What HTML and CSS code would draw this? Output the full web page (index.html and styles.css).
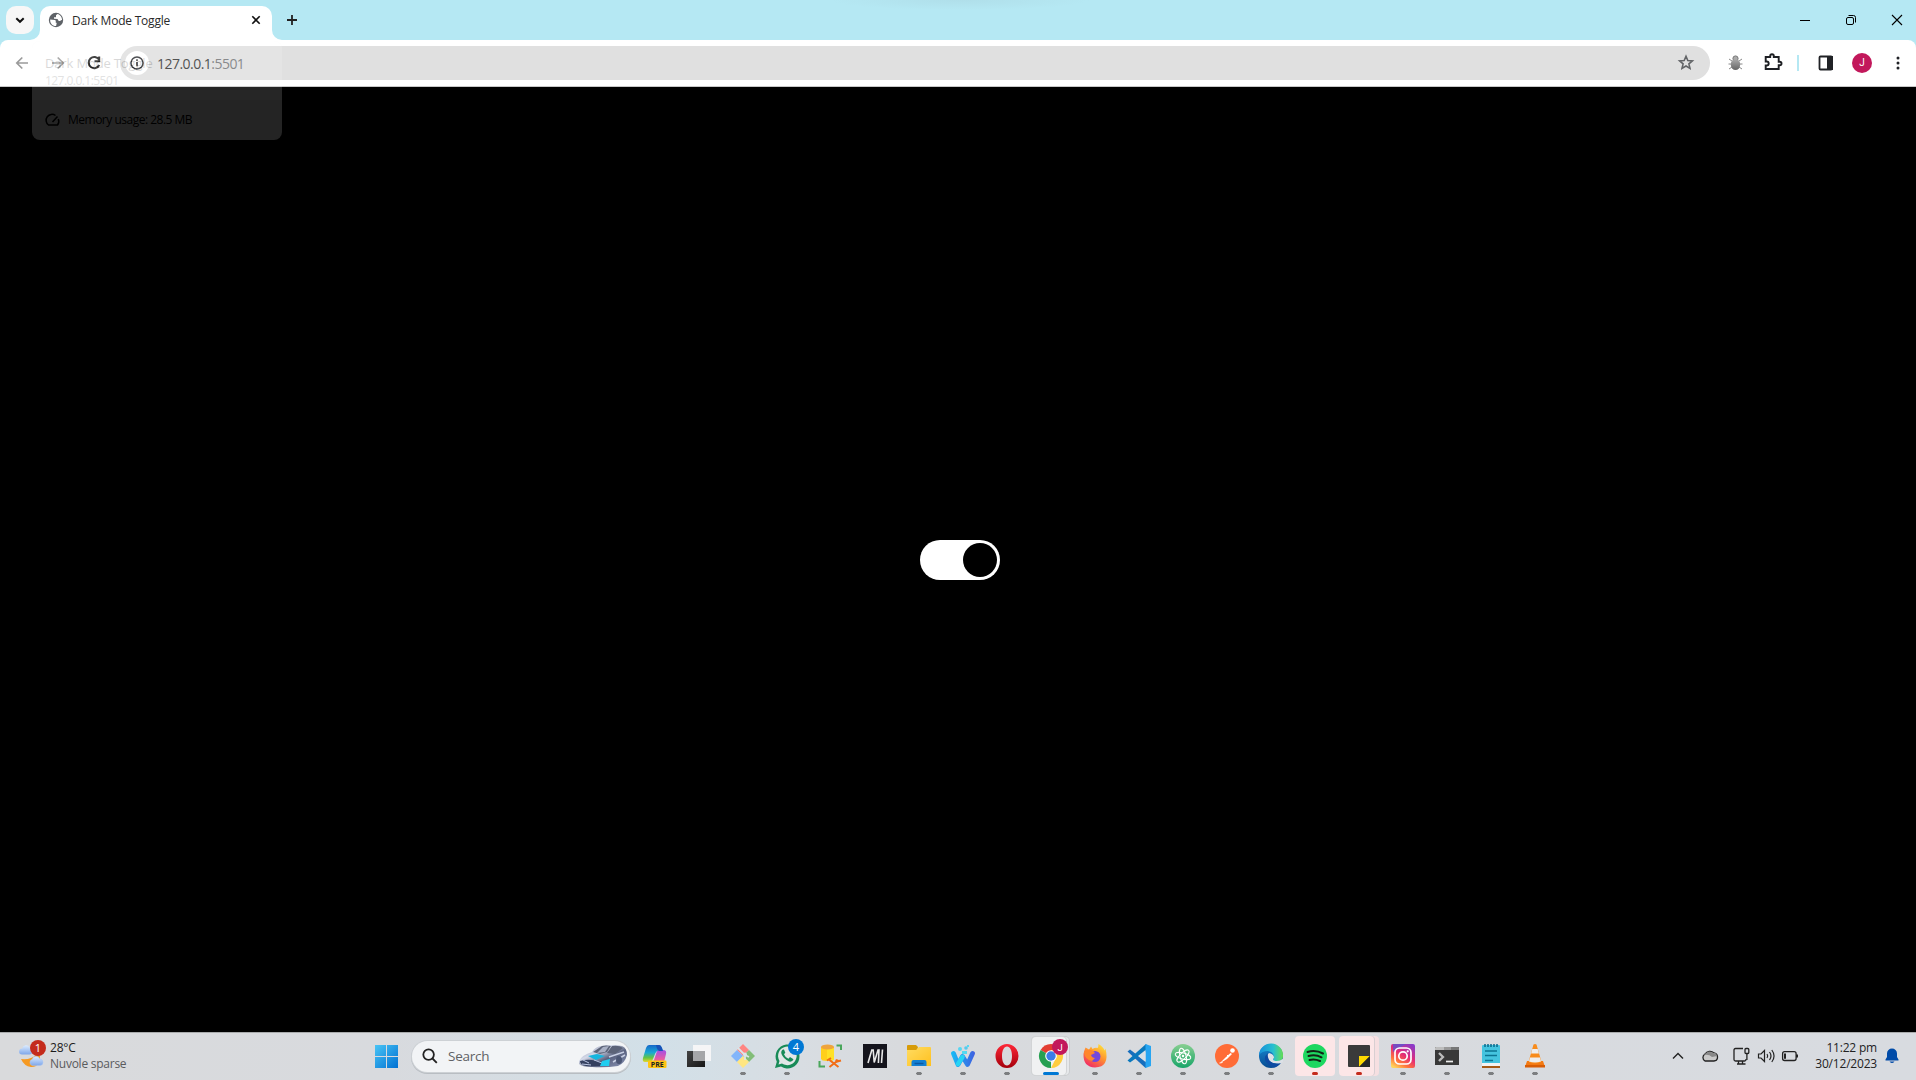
FILE: index.html
```html
<!DOCTYPE html>
<html lang="en">
<head>
<meta charset="utf-8">
<title>Dark Mode Toggle</title>
<link rel="stylesheet" href="styles.css">
</head>
<body>
<div class="desktop">
  <header class="tabstrip">
    <button class="tab-search"><svg width="28" height="28" viewBox="0 0 28 28" fill="none" stroke="#111" stroke-width="2"><path d="M10.3 12.2 14 15.8l3.7-3.6"/></svg></button>
    <div class="tab">
      <svg class="flare flare-left" width="10" height="10"><path d="M10 0v10H0A10 10 0 0 0 10 0" fill="#fff"/></svg>
      <svg width="16" height="16" viewBox="0 0 16 16"><circle cx="8" cy="8" r="7.2" fill="#5f6368"/><path d="M2.200 7.500 6.800 8c1.200.3 1.300 1.500.7 2.300l1.200.8-.6 3C4.200 14.200 1.800 11 2.200 7.500M9.400 1.900 8 3.200v2H6v1.600l3.500.1 1.200 2h1.500l1-.8c.7.2.8.3.9.5C14.300 4.900 12.200 2.600 9.400 1.900" fill="#fff"/></svg>
      <span class="tab-title">Dark Mode Toggle</span>
      <svg class="tab-close" width="16" height="16" viewBox="0 0 16 16" stroke="#111" stroke-width="1.600"><path d="m4.300 4.300 7.400 7.400m0-7.400-7.400 7.400"/></svg>
      <svg class="flare flare-right" width="10" height="10"><path d="M0 0v10h10A10 10 0 0 1 0 0" fill="#fff"/></svg>
    </div>
    <svg class="new-tab" width="20" height="20" viewBox="0 0 20 20" stroke="#222" stroke-width="1.800"><path d="M10 5v10M5 10h10"/></svg>
    <div class="window-buttons">
      <svg width="46" height="40" viewBox="0 0 46 40" fill="none" stroke="#000"><path d="M18 20.500h10"/></svg>
      <svg width="46" height="40" viewBox="0 0 46 40" fill="none" stroke="#000"><rect x="18.500" y="17.500" width="7" height="7" rx="1.500"/><path d="M20.500 15.500h5q2 0 2 2v5"/></svg>
      <svg width="46" height="40" viewBox="0 0 46 40" fill="none" stroke="#000" stroke-width="1.100"><path d="m18 15 10 10m0-10L18 25"/></svg>
    </div>
  </header>

  <nav class="toolbar">
    <div class="nav-buttons">
      <svg width="36" height="36" viewBox="0 0 36 36" fill="none" stroke="#9b9b9b" stroke-width="1.700"><path d="M24 18H13m5.300-5.500L12.800 18l5.500 5.500"/></svg>
      <svg width="36" height="36" viewBox="0 0 36 36" fill="none" stroke="#9b9b9b" stroke-width="1.700"><path d="M12 18h11m-5.300-5.500 5.500 5.500-5.500 5.500"/></svg>
      <svg width="36" height="36" viewBox="0 0 36 36" fill="none" stroke="#222" stroke-width="2"><path d="M23 14.500A5.600 5.600 0 1 0 23.300 20M23.200 11.500v4.700h-4.700"/></svg>
    </div>
    <div class="omnibox">
      <span class="site-info"><svg width="24" height="24" viewBox="0 0 24 24" fill="none" stroke="#303236"><circle cx="12" cy="12" r="6" stroke-width="1.500"/><path d="M12 11v4.300M12 8.300v1.800" stroke-width="1.600"/></svg></span>
      <span class="url">127.0.0.1<span class="port">:5501</span></span>
      <svg class="star" width="18" height="18" viewBox="0 0 18 18" fill="none" stroke="#626467" stroke-width="1.600"><path d="m9 2.300 1.800 4.200 4.600.4-3.500 3 1.100 4.500L9 12l-4 2.400L6.100 9.900l-3.500-3 4.600-.4z"/></svg>
    </div>
    <div class="extensions">
      <svg width="37" height="36" viewBox="0 0 37 36"><defs><linearGradient id="bug" x2="0" y2="1"><stop stop-color="#aaa"/><stop offset="1" stop-color="#666"/></linearGradient></defs><path d="m12 14 3 2m10-2-3 2m-10.500 3H15m7 0h3.500M12 24l3-2m10 2-3-2" stroke="#888"/><circle cx="18.500" cy="13.500" r="2.600" fill="#aaa" stroke="#777"/><ellipse cx="18.500" cy="19.500" rx="4.700" ry="5.500" fill="url(#bug)"/></svg>
      <svg width="36" height="36" viewBox="0 0 36 36"><path d="M12 12h4.500v-1a1.800 1.800 0 0 1 3.600 0v1H25v4.700h1a1.800 1.800 0 0 1 0 3.600h-1V24H12v-3.500h1a2 2 0 0 0 0-4h-1z" transform="translate(-.3)" fill="none" stroke="#1d1f23" stroke-width="1.900"/></svg>
      <span class="separator"></span>
      <svg width="36" height="36" viewBox="0 0 36 36"><rect x="11.500" y="11.500" width="12.500" height="13" rx="1" fill="#fff" stroke="#202226" stroke-width="1.800"/><path d="M19 11h6v14h-6z" fill="#202226"/></svg>
      <span class="avatar">J</span>
      <svg width="36" height="36" viewBox="0 0 36 36" fill="#202226"><circle cx="18" cy="13" r="1.500"/><circle cx="18" cy="18" r="1.500"/><circle cx="18" cy="23" r="1.500"/></svg>
    </div>
  </nav>

  <main class="page"><div class="toggle"><span class="knob"></span></div></main>

  <footer class="taskbar">
    <div class="weather">
      <div class="weather-icon">
        <svg width="26" height="30" viewBox="0 0 26 30"><defs><linearGradient id="cl" x2="0" y2="1"><stop stop-color="#dcecff"/><stop offset="1" stop-color="#7fa7ea"/></linearGradient></defs><path d="M18 15q-5 5-15 4 3 7 10 8 5 .3 9-4.500V14z" fill="#f69a22"/><path d="M4 14.500a3 3 0 0 1 .2-6 4 4 0 0 1 7.500-1q3 .7 2.800 4-.3 3-3 3z" fill="url(#cl)"/><path d="M14 25.500a3.300 3.300 0 0 1 .2-6.200 4 4 0 0 1 7.600-.5q3.200.7 3.200 3.500 0 3.200-3.500 3.200z" fill="url(#cl)" stroke="#a8c4f2" stroke-width=".5"/></svg>
        <span class="weather-badge">1</span>
      </div>
      <div class="weather-text"><span class="temp">28°C</span><span class="sky">Nuvole sparse</span></div>
    </div>

    <svg class="app" viewBox="0 0 44 48"><defs><linearGradient id="win" x1="10" y1="12" x2="34" y2="36" gradientUnits="userSpaceOnUse"><stop stop-color="#4cc8f7"/><stop offset="1" stop-color="#0070d2"/></linearGradient></defs><path d="M11 13h11v11H11zm12 0h11v11H23zm-12 12h11v11H11zm12 0h11v11H23z" fill="url(#win)"/></svg>

    <div class="search">
      <svg width="16" height="16" viewBox="0 0 16 16" fill="none" stroke="#222" stroke-width="1.800"><circle cx="6.600" cy="6.600" r="5.300"/><path d="m10.500 10.500 4.300 4.300"/></svg>
      <span class="search-label">Search</span>
      <svg class="car" width="50" height="24" viewBox="0 0 50 24"><defs><linearGradient id="car" x2="1" y2="1"><stop stop-color="#7b83a0"/><stop offset=".35" stop-color="#d5dae9"/><stop offset=".6" stop-color="#59617f"/><stop offset="1" stop-color="#8c97b8"/></linearGradient></defs><path d="M1 17Q4 11 14 8q3-5 9-6 12-2 21 0 5 2 5 9-2 8-9 11Q27 24 14 23 4 23 1 20z" fill="url(#car)"/><path d="M15 8 24 2q4-1 9 0l-4 6-7 2zM34 2q7-1 11 2l-8 6-8-1z" fill="#5c6378"/><path d="m25 3 6-1-4 6-8 1z" fill="#a9b0c4"/><path d="m10 12 9-2 8 2-9 4z" fill="#16b6df"/><path d="M2 17q7-2 12-1l10 2v4H8q-6-1-6-5" fill="#34405f"/><path d="m5 16 6 3m5-3 8 3M4 20l9 1" stroke="#b7c3e0"/><path d="m24 17 8-2-1 7h-9z" fill="#20cdf0"/><path d="m31 13 15-5m-11 10 12-7" stroke="#c9d0e4" stroke-width="1.500"/><ellipse cx="41" cy="16" rx="3" ry="4" fill="#4b5674"/></svg>
    </div>

    <svg class="app" viewBox="0 0 44 48"><defs><linearGradient id="co1" x2="0" y2="1"><stop stop-color="#1768c9"/><stop offset=".45" stop-color="#18a9d5"/><stop offset=".75" stop-color="#65c544"/><stop offset="1" stop-color="#e7d72d"/></linearGradient><linearGradient id="co2" x2="0" y2="1"><stop stop-color="#a050e8"/><stop offset=".6" stop-color="#e85ca2"/><stop offset="1" stop-color="#ff8b4c"/></linearGradient></defs><path d="M16 13h10q2 0 3 3l1 3h-5q-2 0-3 3l-2 5q-1 3-4 3h-4q-3 0-2-4l3-10q1-3 3-3" fill="url(#co1)"/><path d="M26 18h4q4 0 3 4l-2 8q-1 3-4 3H16q4-1 5-5l2-6q1-4 3-4" fill="url(#co2)"/><path d="M23 13h3q2 0 3 3l1 3h-4q-2-1-3-6" fill="#1752b8"/><rect x="15" y="28.500" width="18.500" height="7.500" rx="1.300" fill="#ffc414"/><text x="24.300" y="34.700" class="pre">PRE</text></svg>
    <svg class="app" viewBox="0 0 44 48"><defs><linearGradient id="tvb" x2="1" y2="1"><stop stop-color="#444"/><stop offset="1" stop-color="#161616"/></linearGradient></defs><path d="M10 19h18v16H10z" fill="url(#tvb)"/><path d="M16 13h18v16H16z" fill="#f5f5f6"/><path d="M16 19h12v10H16z" fill="#a5a6a8"/></svg>
    <svg class="app running" viewBox="0 0 44 48"><path d="m22 12 6 6-6 6-6-6z" fill="#ff8582"/><path d="m16 18 6 6-6 6-6-6z" fill="#83b5fa"/><path d="m28 18 6 6-6 6-6-6z" fill="#82bd78"/><path d="m22 24 6 6-6 6-6-6z" fill="#ffe682"/><path d="m17 16 7 7v5M24 23l4 2" stroke="#dce6e9" stroke-width="1.800" fill="none"/><circle cx="24" cy="22.500" r="2" fill="#dce6e9"/></svg>
    <svg class="app running" viewBox="0 0 44 48"><path d="m10 36 1.800-6.200A12 12 0 1 1 16 34.500z" fill="#188b58"/><path d="m13.500 32.500 1-3.600A9.300 9.300 0 1 1 17 31.500z" fill="#e1e7e7"/><path d="M18 17.500q-2.500 1.500-1.500 4.500 2 5 7.500 7.500 3.500.7 4.500-2.300l-3.500-2.200-1.600 1.700q-3-1-4.400-4.500l1.300-1.400L19 17.500z" fill="#188b58"/><circle cx="31" cy="15" r="8" fill="#0078d4"/><text x="31" y="19" class="badge-text badge-num">4</text></svg>
    <svg class="app" viewBox="0 0 44 48"><path d="M12 15v11.500q0 2.500 6.500 2.500t6.500-2.500V15z" fill="#ffcf1b"/><path d="M18 16h7v11.500q-2 1.500-7 1.500z" fill="#ffe126"/><ellipse cx="18.500" cy="15" rx="6.500" ry="2.500" fill="#efa43c"/><path d="M27.500 13.500H32V18M10.500 29v5.500H16" fill="none" stroke="#49a65b" stroke-width="2"/><path d="m20.500 28 9 7m0-7-9 7" stroke="#f26d16" stroke-width="2"/><path d="m18 28.500 4-2.500m5 1.500 1 2 4-1" stroke="#f26d16" stroke-width="2" fill="none"/></svg>
    <svg class="app" viewBox="0 0 44 48"><path d="M10 12h24v24H10z" fill="#14141c"/><path d="m15 31 3.800-13 1.400 0 1 12.500 3.800-12.500h1l-.6 13m3.100 0 1-13.500" fill="none" stroke="#e8e8e8" stroke-width="1.600"/></svg>
    <svg class="app running" viewBox="0 0 44 48"><defs><linearGradient id="fo" x2="1" y2="1"><stop stop-color="#ffdc62"/><stop offset="1" stop-color="#ffc01e"/></linearGradient></defs><path d="M10 14q0-1 1-1h8l2 2-1 4H10z" fill="#d79b08"/><path d="M10 18h9l3-3h11q1 0 1 1v18H10z" fill="url(#fo)"/><path d="M14.500 34v-4q0-2 2-2h11q2 0 2 2v4z" fill="#1380d3"/><path d="M17.500 31.500h9" stroke="#0b58a3" stroke-width="1.500"/></svg>
    <svg class="app running" viewBox="0 0 44 48"><defs><linearGradient id="wa" gradientUnits="userSpaceOnUse" x1="10" x2="34"><stop stop-color="#17bdf6"/><stop offset="1" stop-color="#405ee0"/></linearGradient></defs><path d="m12.500 21.500 4.500 11 4.500-8 5 8 5-11" fill="none" stroke="url(#wa)" stroke-width="4.800" stroke-linecap="round" stroke-linejoin="round"/><path d="m17 32 4.500-7" stroke="#27d4f4" stroke-width="4.500" stroke-linecap="round"/><circle cx="19" cy="17" r="2" fill="#56d6f3"/><circle cx="25" cy="16" r="1.800" fill="#55c9ee"/><path d="M26 13h2v2h-2zM21 19h5v3h-5z" fill="#55d9f0"/></svg>
    <svg class="app running" viewBox="0 0 44 48"><defs><linearGradient id="op" x2="0" y2="1"><stop stop-color="#ff2738"/><stop offset="1" stop-color="#a4000b"/></linearGradient></defs><path fill-rule="evenodd" d="M22 12a11.500 12 0 1 0 0 24 11.500 12 0 0 0 0-24m0 2.500c3 0 5 4 5 9.500s-2 9.500-5 9.500-5-4-5-9.500 2-9.500 5-9.500" fill="url(#op)"/></svg>
    <div class="app active">
      <svg width="44" height="48" viewBox="0 0 44 48"><path d="M22 24 11.600 18A12 12 0 0 1 32.400 18z" fill="#e33d32"/><path d="M22 24v12a12 12 0 0 1-10.400-18z" fill="#26a052"/><path d="M22 24h6l-6 12a12 12 0 0 0 10.400-18H22z" fill="#ffcd40"/><circle cx="22" cy="24" r="5.800" fill="#fff"/><circle cx="22" cy="24" r="4.700" fill="#3a7de8"/><circle cx="31" cy="15" r="8" fill="#c2185b"/><text x="31" y="18.500" class="badge-text badge-j">J</text><rect x="14" y="40" width="16" height="3" rx="1.500" fill="#0078d4"/></svg>
    </div>
    <svg class="app running" viewBox="0 0 44 48"><defs><linearGradient id="ff" x1=".8" x2=".2" y2="1"><stop stop-color="#ffe338"/><stop offset=".45" stop-color="#ff9330"/><stop offset="1" stop-color="#f0216b"/></linearGradient></defs><path d="m12.500 15.500 3.500 2q1-1 2-3l1.500 2.500q3-2 5-1 1-1 1-4 5 3 6 6.500l1-2Q37 35 22 35.500 10 35 10.500 22q.5-3 2-6.500" fill="url(#ff)"/><circle cx="22" cy="24.500" r="5.500" fill="#7347dc"/><path d="M11 20q7-5 11 1l-4 2q1 3 4 3l-3 3q-7-1-8-9" fill="#ff862c"/></svg>
    <svg class="app running" viewBox="0 0 44 48"><path d="m10.500 19.500 2.500-2 19 14.500-3.500 4z" fill="#176ebd"/><path d="M29 12 10.500 28.500l2.500 2L32 17z" fill="#0a78bd"/><path d="m28.500 12 5.500 2v20l-5.500 2z" fill="#27a5f2"/><path d="m28.500 18-7.500 6 7.500 6z" fill="#dae0e5"/></svg>
    <svg class="app running" viewBox="0 0 44 48"><defs><linearGradient id="at" x2="0" y2="1"><stop stop-color="#88cf91"/><stop offset="1" stop-color="#17a568"/></linearGradient></defs><circle cx="22" cy="24" r="12" fill="url(#at)"/><g fill="none" stroke="#fff" stroke-width="1"><ellipse cx="22" cy="24" rx="8" ry="3" transform="rotate(15 22 24)"/><ellipse cx="22" cy="24" rx="8" ry="3" transform="rotate(75 22 24)"/><ellipse cx="22" cy="24" rx="8" ry="3" transform="rotate(-45 22 24)"/></g><circle cx="22" cy="24" r="1.200" fill="#fff"/></svg>
    <svg class="app running" viewBox="0 0 44 48"><circle cx="22" cy="24" r="12" fill="#ff6c37"/><path d="m15.500 30.500 5-5 5-4.500 1.500 1-5 5-5 3z" fill="#fff"/><circle cx="27.500" cy="18.500" r="2.300" fill="#fff"/><path d="m14.500 31 3-.5M22 23l2 2" stroke="#fff"/></svg>
    <svg class="app running" viewBox="0 0 44 48"><defs><linearGradient id="ed" x2="1"><stop stop-color="#168fda"/><stop offset=".6" stop-color="#27bfd0"/><stop offset="1" stop-color="#67df50"/></linearGradient><linearGradient id="ed2" x2="0" y2="1"><stop stop-color="#168ad4"/><stop offset="1" stop-color="#074b91"/></linearGradient></defs><circle cx="22" cy="24" r="12" fill="url(#ed2)"/><path d="M10 23a12 12 0 0 1 24 1q0 5-5 5h-4q-2-1 0-3 0-6-6-7-6 0-9 4" fill="url(#ed)"/><path d="M20 21q-3 2-1 6 3 5 12 5l3-2v-3q-5 3-9 1.500-2-1 0-2.500 0-4-5-5" fill="#dce1e7"/><path d="M19 21q-5 4-2 9 3 4 8 5.500 4-1 7-4.500-9 2-12-3-2-4-1-7" fill="#0d4aa2"/></svg>
    <div class="app alert">
      <svg width="44" height="48" viewBox="0 0 44 48"><circle cx="22" cy="24" r="12" fill="#1ed760"/><path d="M14.500 20q8-2.500 15.500 1.500M15.500 24q7-2 13 1.300M16.500 28q5-1.500 10.500 1" fill="none" stroke="#132416" stroke-width="2" stroke-linecap="round"/><rect x="19" y="40" width="6" height="3" rx="1.500" fill="#c42b1c"/></svg>
    </div>
    <div class="app alert grouped">
      <svg width="44" height="48" viewBox="0 0 44 48"><rect x="11" y="13" width="22" height="22" rx="1" fill="#3a3a3a"/><path d="M22 24h11L22 35z" fill="#ffd800"/><path d="M33 24v11H22z" fill="#272727"/><rect x="19" y="40" width="6" height="3" rx="1.500" fill="#c42b1c"/></svg>
    </div>
    <svg class="app running" viewBox="0 0 44 48"><defs><linearGradient id="ig" x1=".8" x2=".2" y2="1"><stop stop-color="#8b3ac8"/><stop offset=".45" stop-color="#e52c76"/><stop offset=".75" stop-color="#ff743b"/><stop offset="1" stop-color="#ffd35a"/></linearGradient></defs><rect x="10" y="12" width="24" height="24" rx="2" fill="url(#ig)"/><path d="M12 12h13l-13 8z" fill="#5659d4" opacity=".7"/><g fill="none" stroke="#fff" stroke-width="1.700"><rect x="14" y="16" width="16" height="16" rx="4.500"/><circle cx="22" cy="24" r="4.200"/></g><circle cx="26.700" cy="19.300" r="1.100" fill="#fff"/></svg>
    <svg class="app running" viewBox="0 0 44 48"><path d="M10 16q0-1 1-1h22q1 0 1 1v17H10z" fill="#383838"/><path d="M10 16q0-1 1-1h8v3h-9z" fill="#bdbdbd"/><path d="M19 15h7v3h-7z" fill="#999"/><path d="M26 15h7q1 0 1 1v2h-8z" fill="#777"/><path d="m14 21 4 4-4 4" fill="none" stroke="#bcbcbc" stroke-width="2.300"/><path d="M21 29.500h7" stroke="#eee" stroke-width="1.700"/></svg>
    <svg class="app running" viewBox="0 0 44 48"><rect x="13" y="13" width="18" height="20" rx="1" fill="#45c4df"/><path d="M13 31h18v3H13z" fill="#f3f3f3"/><path d="M13 34h18v2H13z" fill="#a65a17"/><path d="M16 12v3m3-3v3m3-3v3m3-3v3m3-3v3" stroke="#08688b" stroke-width="1.500"/><path d="M16 19h12m-12 4.500h12m-12 5h8" stroke="#0c7493" stroke-width="1.500"/></svg>
    <svg class="app running" viewBox="0 0 44 48"><path d="M14 29h16l2 6H12z" fill="#f37912"/><path d="m20.500 12.500 1.500-.5 1.500.5L28.500 30q-6.500 3-13 0z" fill="#f88c1c"/><path d="m19.300 17 5.400 0 1.200 4.500h-7.800zM17 25.500h10l1 4q-6 2-12 0z" fill="#eee"/><path d="M12 33h20v2.500H12z" fill="#d85d04"/></svg>

    <div class="tray">
      <svg width="32" height="48" viewBox="0 0 32 48" fill="none" stroke="#222" stroke-width="1.400"><path d="m11 26.500 5-5 5 5"/></svg>
      <svg width="32" height="48" viewBox="0 0 32 48"><path d="M11 29a4 4 0 0 1 0-7 6 6 0 0 1 9-1q4 1 3.500 5-.5 3-3.500 3z" fill="#c9c9c9" stroke="#222" stroke-width="1.300"/><path d="M10 23q5-1 8 2l5-1q-1-4-4-3-4-4-9 2" fill="#888"/></svg>
      <svg class="net" width="24" height="48" viewBox="0 0 24 48" fill="none" stroke="#222" stroke-width="1.300"><path d="M13 16.500H5.500Q4 16.500 4 18v9.500Q4 29 5.500 29h9q1.500 0 1.500-1.500V27M8.500 29v3m4-3v3M7 32h8.500"/><rect x="15" y="16.500" width="3.800" height="5" rx="1"/><path d="M16.900 21.500V28"/></svg>
      <svg width="24" height="48" viewBox="0 0 24 48" fill="none" stroke="#222" stroke-width="1.200"><path d="M4.500 22H7l3.500-3.500v11L7 26H4.500zM13 22q1.500 2 0 4m2.500-6q3 4 0 8m2.300-10q4.500 6 0 12"/></svg>
      <svg width="24" height="48" viewBox="0 0 24 48" fill="none" stroke="#222" stroke-width="1.300"><rect x="4.600" y="19.700" width="13.500" height="8.800" rx="2"/><path d="M19 22.500v3" stroke-width="2"/><path d="M7 21.500v5.200" stroke-width="2"/></svg>
    </div>
    <div class="clock"><span>11:22 pm</span><span>30/12/2023</span></div>
    <svg class="bell" width="16" height="18" viewBox="0 0 16 18" fill="#004ba8"><path d="M1.500 12.500 3 10V6.500a5 5 0 0 1 10 0V10l1.500 2.500v1h-13zM5.500 14.500h5q-2.500 3-5 0"/></svg>
  </footer>

  <aside class="hover-card">
    <div class="card-head"><span class="card-title">Dark Mode Toggle</span><span class="card-host">127.0.0.1:5501</span></div>
    <div class="card-memory"><svg width="16" height="16" viewBox="0 0 16 16" fill="none" stroke="#000" stroke-width="1.500"><path d="M10.500 3.500A5.500 5.500 0 0 0 3.500 13h9a6 6 0 0 0 .8-6M7.500 10l5-5.500"/></svg><span>Memory usage: 28.5 MB</span></div>
  </aside>
</div>
</body>
</html>
```
FILE: styles.css
```css
* { box-sizing: border-box; }
body { margin: 0; background: #000; font-family: "Open Sans", "Noto Sans", sans-serif; overflow: hidden; }
svg { display: block; flex: none; }
.desktop { position: relative; width: 1916px; height: 1080px; display: flex; flex-direction: column; background: #000; }

.tabstrip { height: 40px; background: radial-gradient(ellipse 130px 10px at 960px 0, #b0dfea, #b5e8f3); display: flex; align-items: center; padding-left: 6px; }
.tab-search { width: 28px; height: 28px; padding: 0; border: 0; border-radius: 10px; background: #f7f7f7; }
.tab { position: relative; width: 232px; height: 34px; margin: 6px 0 0 6px; padding: 0 8px 6px; border-radius: 10px 10px 0 0; background: #fff; display: flex; align-items: center; }
.flare { position: absolute; bottom: 0; }
.flare-left { left: -10px; }
.flare-right { right: -10px; }
.tab-title { margin: 1px 0 0 8px; font-size: 12px; letter-spacing: -.22px; color: #2a2a2a; white-space: nowrap; }
.tab-close { margin-left: auto; }
.new-tab { margin-left: 10px; }
.window-buttons { display: flex; margin-left: auto; margin-right: -4px; }

.toolbar { height: 47px; background: #fff; border-radius: 8px 8px 0 0; border-bottom: 1px solid #c8c8c8; display: flex; align-items: center; padding-left: 4px; box-shadow: 0 -8px 0 0 #b5e8f3; clip-path: inset(0); }
.desktop { background: linear-gradient(#b5e8f3 60px, #000 60px); }
.nav-buttons { display: flex; }
.omnibox { width: 1590px; height: 34px; flex: none; margin-left: 8px; padding: 0 15px 0 5px; border-radius: 17px; background: #e0e0e0; display: flex; align-items: center; }
.site-info { width: 24px; height: 24px; border-radius: 50%; background: #fff; }
.url { margin-left: 8px; font-size: 14px; letter-spacing: -.53px; color: #333; }
.port { color: #747678; }
.star { margin-left: auto; }
.extensions { display: flex; align-items: center; margin-left: 7px; }
.separator { width: 2px; height: 16px; margin: 0 9px 0 7px; background: #b5e8f3; }
.avatar { width: 20px; height: 20px; margin: 0 8px; border-radius: 50%; background: #c2185b; color: #fff; font: 10px/20px Roboto, sans-serif; text-align: center; }

.page { height: 945px; display: flex; align-items: center; justify-content: center; padding: 1px 0 0 4px; background: #000; }
.toggle { width: 80px; height: 40px; padding: 3px; border-radius: 20px; background: #fff; display: flex; justify-content: flex-end; }
.knob { width: 34px; height: 34px; border-radius: 50%; background: #000; }

.taskbar { height: 48px; display: flex; align-items: center; background: linear-gradient(90deg, #d9dadc 0, #d8dade 390px, #d2e0e8 660px, #d8dde2 800px, #d8dadd 900px, #d8dbe0 1916px); box-shadow: inset 0 1px #a9abac; }
.weather { width: 364px; display: flex; padding-left: 18px; }
.weather-icon { position: relative; width: 26px; height: 30px; margin-right: 6px; }
.weather-badge { position: absolute; left: 12px; top: 0; width: 16px; height: 16px; border-radius: 50%; background: #c42b1c; color: #fff; font-size: 11px; line-height: 16px; text-align: center; }
.weather-text { display: flex; flex-direction: column; font-size: 12px; line-height: 16px; }
.temp { color: #1b1b1b; letter-spacing: -.2px; }
.sky { color: #5a5b5d; letter-spacing: -.25px; }
.app { width: 44px; height: 48px; flex: none; }
.running { background: radial-gradient(ellipse 3.200px 1.800px at 22px 41.500px, #7c7e80 85%, transparent); }
.search { width: 218px; height: 31px; margin: 0 3px 0 4px; padding: 0 2px 0 10px; border-radius: 16px; background: #f2f4f6; box-shadow: 0 0 0 1px #cdd1d5, 0 1px 0 1px #b8bdc2; display: flex; align-items: center; }
.search-label { margin-left: 10px; font-size: 13.500px; letter-spacing: -.25px; color: #606265; }
.car { margin-left: auto; }
.pre { font: bold 7px "Open Sans", sans-serif; text-anchor: middle; fill: #222; }
.badge-text { text-anchor: middle; fill: #fff; }
.badge-num { font: 11px "Open Sans", sans-serif; }
.badge-j { font: 9.500px Roboto, sans-serif; }
.active { position: relative; }
.active::before { content: ""; position: absolute; left: 3px; top: 5px; width: 37px; height: 38px; border-radius: 4px; background: #e6e8ea; box-shadow: 0 0 0 1px #cbcdcf; }
.active::after { content: ""; position: absolute; left: 3px; top: 5px; width: 34px; height: 38px; border-radius: 4px; background: #f0f1f2; box-shadow: 0 0 0 1px #d2d4d6; }
.active svg, .alert svg { position: relative; z-index: 1; }
.alert { position: relative; }
.alert::after { content: ""; position: absolute; left: 2px; top: 4px; width: 40px; height: 40px; border-radius: 4px; background: #fce6e7; }
.grouped::before { content: ""; position: absolute; left: 6px; top: 4px; width: 36px; height: 40px; border-radius: 4px; background: #f6dfe1; }
.grouped::after { width: 35px; box-shadow: 1px 0 #d8cfd2; }
.tray { display: flex; margin-left: auto; }
.net { margin-left: 4px; }
.clock { width: 76px; margin-left: -1px; display: flex; flex-direction: column; align-items: flex-end; font-size: 12px; line-height: 16px; letter-spacing: -.2px; color: #222; white-space: nowrap; }
.bell { margin: 0 16px 0 7px; }

.hover-card { position: absolute; left: 32px; top: 41px; width: 250px; height: 99px; border-radius: 8px; overflow: hidden; opacity: .15; background: #f0f0f0; color: #000; display: flex; flex-direction: column; }
.card-head { height: 59px; padding: 14px 13px 0; display: flex; flex-direction: column; background: #fff; }
.card-title { font-size: 13px; line-height: 17px; letter-spacing: -.15px; }
.card-host { font-size: 12px; line-height: 18px; letter-spacing: -.55px; color: #444; }
.card-memory { height: 39px; padding-left: 13px; display: flex; align-items: center; font-size: 12px; letter-spacing: -.5px; }
.card-memory span { margin-left: 7px; }
```
